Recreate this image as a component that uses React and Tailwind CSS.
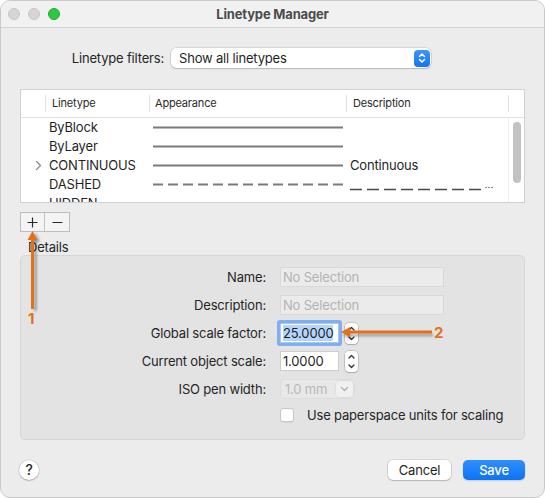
import React from 'react';

const rows = [
  { name: 'ByBlock', line: 'solid' },
  { name: 'ByLayer', line: 'solid' },
  { name: 'CONTINUOUS', line: 'solid', desc: 'Continuous', open: true },
  { name: 'DASHED', line: 'dashed', dashedDesc: true },
  { name: 'HIDDEN', line: 'none' },
];

const UpDown = ({ stroke = '#fff' }) => (
  <svg width="8" height="12" viewBox="0 0 8 12" fill="none" stroke={stroke} strokeWidth="1.5" strokeLinecap="round" strokeLinejoin="round">
    <path d="M1.5 4.5 L4 2 L6.5 4.5" />
    <path d="M1.5 7.5 L4 10 L6.5 7.5" />
  </svg>
);

const Stepper = () => (
  <div className="ml-[6px] flex h-[21px] w-[13px] flex-col items-center justify-between rounded-[4px] bg-white py-[2px] shadow-[0_0_0_0.5px_rgba(0,0,0,0.25),0_1px_1.5px_rgba(0,0,0,0.15)]">
    <svg width="9" height="7" viewBox="0 0 9 7" fill="none" stroke="#333" strokeWidth="1.3" strokeLinecap="round" strokeLinejoin="round">
      <path d="M2 5 L4.5 2.5 L7 5" />
    </svg>
    <svg width="9" height="7" viewBox="0 0 9 7" fill="none" stroke="#333" strokeWidth="1.3" strokeLinecap="round" strokeLinejoin="round">
      <path d="M2 2 L4.5 4.5 L7 2" />
    </svg>
  </div>
);

const Row = ({ label, children, className = '' }) => (
  <div className={`flex h-[20px] items-center ${className}`}>
    <div className="w-[245px] text-right text-[#262626]">{label}</div>
    <div className="ml-[14px] flex items-center">{children}</div>
  </div>
);

export default function App() {
  return (
    <div className="relative h-[498px] w-[545px] bg-white font-['Inter','Liberation_Sans',sans-serif] text-[13px] leading-none tracking-[-0.18px]">
      <div className="flex h-full w-full flex-col overflow-hidden rounded-[10px] border border-[#c9c9c9] bg-[#ececec]">
        {/* title bar */}
        <div className="relative flex h-[27px] items-center border-b border-[#d3d3d3] bg-[#f2f1f2]">
          <div className="ml-[7px] flex gap-[8px]">
            <span className="h-[12px] w-[12px] rounded-full border border-[#c6c5c6] bg-[#d6d5d6]" />
            <span className="h-[12px] w-[12px] rounded-full border border-[#c6c5c6] bg-[#d6d5d6]" />
            <span className="h-[12px] w-[12px] rounded-full border border-[#25a836] bg-[#2ec942]" />
          </div>
          <div className="absolute inset-x-0 top-[7px] text-center font-bold text-[#4b4b4b]">Linetype Manager</div>
        </div>

        {/* filter */}
        <div className="mt-[20px] flex h-[20px] items-center">
          <div className="w-[163px] text-right text-[#262626]">Linetype filters:</div>
          <div className="ml-[7px] flex h-[20px] w-[260px] items-center justify-between rounded-[5px] bg-white pl-[8px] pr-[1px] text-[#1f1f1f] shadow-[0_0_0_0.5px_rgba(0,0,0,0.18),0_1px_1.5px_rgba(0,0,0,0.14)]">
            <span>Show all linetypes</span>
            <div className="flex h-[17px] w-[16px] items-center justify-center rounded-[4px] bg-gradient-to-b from-[#3d95fc] to-[#1472f4]">
              <UpDown />
            </div>
          </div>
        </div>

        {/* list */}
        <div className="mx-[19px] mt-[21px] h-[114px] overflow-hidden border border-[#d0d0d0] bg-white">
          <div className="flex h-[28px] items-center border-b border-[#e2e2e2] text-[11px] text-[#2a2a2a]">
            <div className="w-[24px]" />
            <div className="h-[17px] w-px bg-[#e0e0e0]" />
            <div className="w-[103px] pl-[6px]">Linetype</div>
            <div className="h-[17px] w-px bg-[#e0e0e0]" />
            <div className="w-[196px] pl-[5px]">Appearance</div>
            <div className="h-[17px] w-px bg-[#e0e0e0]" />
            <div className="w-[161px] pl-[6px]">Description</div>
            <div className="h-[17px] w-px bg-[#e0e0e0]" />
            <div className="flex-1" />
          </div>
          <div className="flex">
            <div className="w-[487px]">
              {rows.map((r) => (
                <div key={r.name} className="flex h-[19px] items-center text-[#1f1f1f]">
                  <div className="flex w-[24px] justify-end pr-[3px]">
                    {r.open && (
                      <svg width="7" height="11" viewBox="0 0 7 11" fill="none" stroke="#8a8a8a" strokeWidth="1.2" strokeLinecap="round" strokeLinejoin="round">
                        <path d="M1.5 1.5 L5.5 5.5 L1.5 9.5" />
                      </svg>
                    )}
                  </div>
                  <div className="w-[104px] pl-[4px]">{r.name}</div>
                  <div className="w-[197px] pl-[4px] pr-[3px]">
                    {r.line !== 'none' && (
                      <svg width="190" height="3" viewBox="0 0 190 3">
                        <line x1="0" y1="1.5" x2="190" y2="1.5" stroke="#7a7a7a" strokeWidth="2" strokeDasharray={r.line === 'dashed' ? '10 5' : undefined} />
                      </svg>
                    )}
                  </div>
                  <div className="relative h-full flex-1 pl-[4px]">
                    {r.desc && <span className="flex h-full items-center">{r.desc}</span>}
                    {r.dashedDesc && (
                      <svg className="absolute left-[4px] top-[11px]" width="144" height="6" viewBox="0 0 144 6">
                        <line x1="0" y1="3.5" x2="134" y2="3.5" stroke="#4a4a4a" strokeWidth="1.3" strokeDasharray="12 5" />
                        <circle cx="136" cy="1.5" r="0.7" fill="#4a4a4a" />
                        <circle cx="139" cy="1.5" r="0.7" fill="#4a4a4a" />
                        <circle cx="142" cy="1.5" r="0.7" fill="#4a4a4a" />
                      </svg>
                    )}
                  </div>
                </div>
              ))}
            </div>
            <div className="h-[90px] flex-1 border-l border-[#ececec] pl-[4px] pt-[4px]">
              <div className="h-[61px] w-[8px] rounded-full bg-[#c2c2c2]" />
            </div>
          </div>
        </div>

        {/* + / - */}
        <div className="ml-[19px] mt-[9px] flex h-[20px] w-[50px] border border-[#bdbdbd] bg-[#f4f4f4] text-[#2a2a2a]">
          <div className="flex w-[24px] items-center justify-center border-r border-[#c4c4c4]">
            <svg width="11" height="11" viewBox="0 0 11 11" stroke="#2a2a2a" strokeWidth="1.2">
              <path d="M5.5 0.5 V10.5 M0.5 5.5 H10.5" />
            </svg>
          </div>
          <div className="flex flex-1 items-center justify-center">
            <svg width="11" height="11" viewBox="0 0 11 11" stroke="#2a2a2a" strokeWidth="1.2">
              <path d="M0.5 5.5 H10.5" />
            </svg>
          </div>
        </div>

        {/* details */}
        <div className="ml-[27px] mt-[8px] h-[15px] leading-[15px] text-[#262626]">Details</div>
        <div className="mx-[19px] flex h-[185px] flex-col gap-[8px] rounded-[5px] border border-[#d6d6d6] bg-[#e3e3e3] pt-[11px]">
          <Row label="Name:">
            <div className="h-[20px] w-[164px] border border-[#d9d9d9] bg-[#ebebeb] pl-[2px] leading-[18px] text-[#b3b3b3]">No Selection</div>
          </Row>
          <Row label="Description:">
            <div className="h-[20px] w-[164px] border border-[#d9d9d9] bg-[#ebebeb] pl-[2px] leading-[18px] text-[#b3b3b3]">No Selection</div>
          </Row>
          <Row label="Global scale factor:">
            <div className="h-[20px] w-[59px] rounded-[1px] border border-[#a9c6f0] bg-white pl-[2px] leading-[18px] text-[#1f1f1f] ring-[3px] ring-[#80aef3]">
              <span className="bg-[#b3d5fd]">25.0000</span>
            </div>
            <Stepper />
          </Row>
          <Row label="Current object scale:">
            <div className="h-[20px] w-[59px] border border-[#cdcdcd] bg-white pl-[2px] leading-[18px] text-[#1f1f1f]">1.0000</div>
            <Stepper />
          </Row>
          <Row label="ISO pen width:">
            <div className="flex h-[20px] w-[75px] items-center justify-between rounded-[4px] border border-[#dcdcdc] bg-[#e8e8e8] pl-[4px] pr-[1px] text-[#b8b8b8]">
              <span>1.0 mm</span>
              <div className="flex h-[16px] w-[17px] items-center justify-center rounded-[4px] bg-[#f0f0f0] shadow-[0_0_0_0.5px_rgba(0,0,0,0.08)]">
                <svg width="9" height="6" viewBox="0 0 9 6" fill="none" stroke="#b0b0b0" strokeWidth="1.3" strokeLinecap="round" strokeLinejoin="round">
                  <path d="M1.5 1.5 L4.5 4.5 L7.5 1.5" />
                </svg>
              </div>
            </div>
          </Row>
          <Row label="" className="-mt-[2px]">
            <div className="h-[14px] w-[14px] rounded-[3px] border border-[#c6c6c6] bg-white shadow-[0_1px_1px_rgba(0,0,0,0.06)]" />
            <span className="ml-[13px] text-[#262626]">Use paperspace units for scaling</span>
          </Row>
        </div>

        {/* footer */}
        <div className="mt-[20px] flex h-[20px] items-center pl-[18px] pr-[19px]">
          <div className="flex h-[20px] w-[20px] items-center justify-center rounded-full bg-white text-[14px] font-medium text-[#262626] shadow-[0_0_0_0.5px_rgba(0,0,0,0.18),0_1px_1.5px_rgba(0,0,0,0.18)]">?</div>
          <div className="ml-auto flex gap-[12px]">
            <div className="flex h-[20px] w-[63px] items-center justify-center rounded-[5px] bg-white text-[#1f1f1f] shadow-[0_0_0_0.5px_rgba(0,0,0,0.18),0_1px_1.5px_rgba(0,0,0,0.16)]">Cancel</div>
            <div className="flex h-[20px] w-[62px] items-center justify-center rounded-[5px] bg-gradient-to-b from-[#2f8ffc] to-[#0c72f5] font-medium text-white shadow-[0_1px_1.5px_rgba(0,0,0,0.15)]">Save</div>
          </div>
        </div>
      </div>

      {/* annotations */}
      <svg className="pointer-events-none absolute left-0 top-0" width="545" height="498" viewBox="0 0 545 498">
        <defs>
          <filter id="sh" x="-50%" y="-50%" width="200%" height="200%">
            <feGaussianBlur stdDeviation="1" />
          </filter>
        </defs>
        <g fill="rgba(0,0,0,0.28)" filter="url(#sh)">
          <polygon points="35.5,233 30.5,242 40.5,242" />
          <rect x="34" y="240" width="3" height="71" />
          <polygon points="342.5,335 351,330 351,340" />
          <rect x="350" y="333.5" width="83" height="3" />
        </g>
        <g fill="#e4701a">
          <polygon points="32.5,231 27.5,240 37.5,240" />
          <rect x="31" y="238" width="3" height="71" />
          <polygon points="341,332 350,327 350,337" />
          <rect x="349" y="330.5" width="83" height="3" />
        </g>
      </svg>
      <span className="pointer-events-none absolute left-[28px] top-[311px] text-[15px] font-bold leading-[15px] text-[#e4701a]">1</span>
      <span className="pointer-events-none absolute left-[434px] top-[325px] text-[15px] font-bold leading-[15px] text-[#e4701a]">2</span>
    </div>
  );
}
